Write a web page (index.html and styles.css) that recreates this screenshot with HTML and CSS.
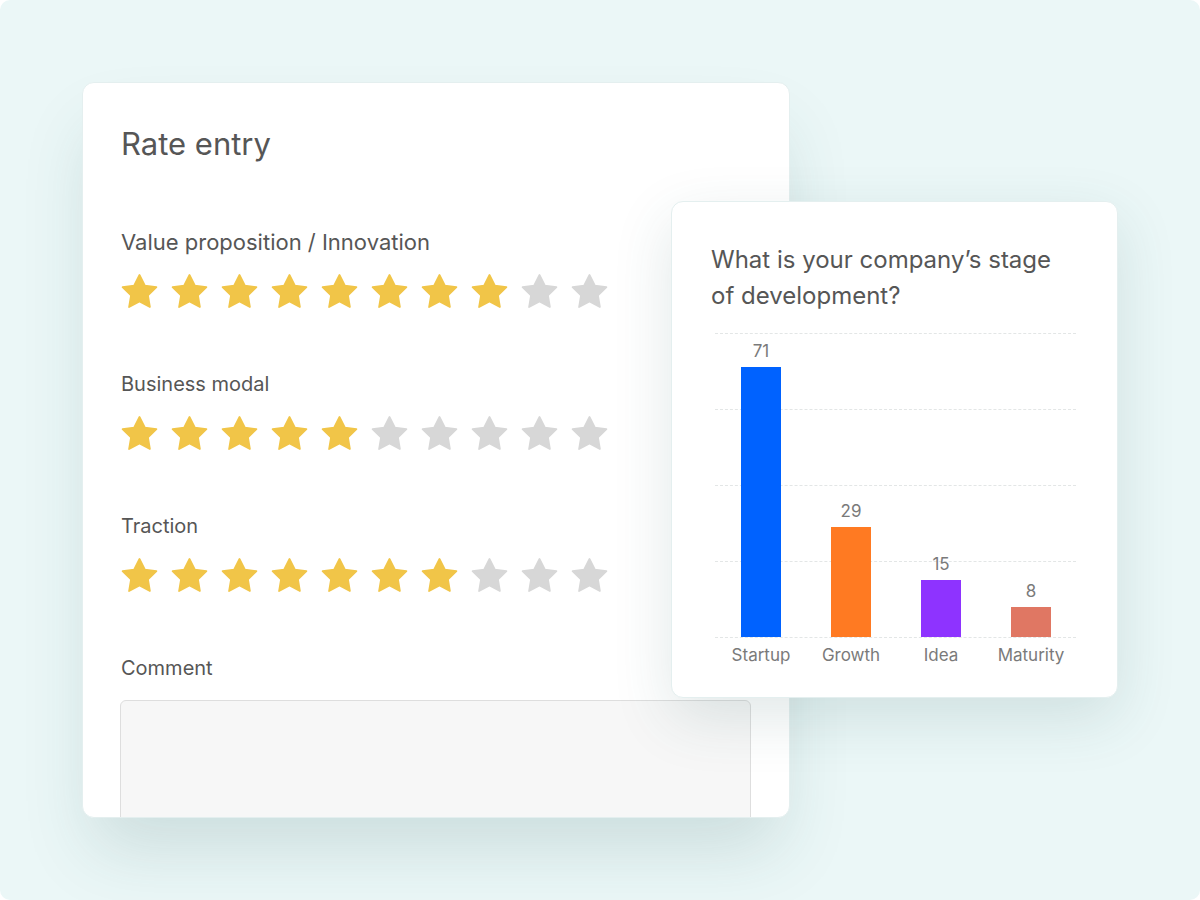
FILE: index.html
```html
<!DOCTYPE html>
<html lang="en">
<head>
  <meta charset="UTF-8" />
  <meta name="viewport" content="width=device-width, initial-scale=1.0"/>
  <title>Rate entry</title>
  <link rel="stylesheet" href="styles.css">
</head>
<body>
  <svg class="sprite" aria-hidden="true">
    <symbol id="star" viewBox="1.5 1.5 21 21">
      <path d="M12 2.6 15 8.6 21.6 9.5 16.8 14.2 17.9 20.8 12 17.7 6.1 20.8 7.2 14.2 2.4 9.5 9 8.6Z" stroke="currentColor" stroke-width="1" stroke-linejoin="round"/>
    </symbol>
  </svg>

  <div class="stage">
    <!-- Rating form -->
    <section class="card rate-card">
      <h1>Rate entry</h1>

      <div class="criterion">
        <h2 class="lead">Value proposition / Innovation</h2>
        <div class="stars" data-score="8"></div>
      </div>

      <div class="criterion">
        <h2>Business modal</h2>
        <div class="stars" data-score="5"></div>
      </div>

      <div class="criterion">
        <h2>Traction</h2>
        <div class="stars" data-score="7"></div>
      </div>

      <div class="comment">
        <h2>Comment</h2>
        <div class="textarea"></div>
      </div>
    </section>

    <!-- Poll results -->
    <section class="card poll-card">
      <h3>What is your company’s stage of development?</h3>

      <div class="chart">
        <div class="grid">
          <div class="grid-row"></div>
          <div class="grid-row"></div>
          <div class="grid-row"></div>
          <div class="grid-row"></div>
        </div>
        <div class="bars">
          <div class="bar-col">
            <span class="bar-value">71</span>
            <div class="bar startup" style="height: 88.75%"></div>
          </div>
          <div class="bar-col">
            <span class="bar-value">29</span>
            <div class="bar growth" style="height: 36.25%"></div>
          </div>
          <div class="bar-col">
            <span class="bar-value">15</span>
            <div class="bar idea" style="height: 18.75%"></div>
          </div>
          <div class="bar-col">
            <span class="bar-value">8</span>
            <div class="bar maturity" style="height: 10%"></div>
          </div>
        </div>
      </div>

      <div class="bar-labels">
        <span>Startup</span>
        <span>Growth</span>
        <span>Idea</span>
        <span>Maturity</span>
      </div>
    </section>
  </div>

  <script>
    // Fill each rating row with ten stars
    document.querySelectorAll('.stars').forEach(row => {
      const score = Number(row.dataset.score);
      for (let i = 0; i < 10; i++) {
        const cls = i < score ? 'star on' : 'star';
        row.insertAdjacentHTML('beforeend',
          '<svg class="' + cls + '"><use href="#star"/></svg>');
      }
    });
  </script>
</body>
</html>
```

FILE: styles.css
```css
:root {
  --bg: #ebf7f7;
  --text: #565656;
  --muted: #7a7a7a;
  --gold: #f1c548;
  --grey-star: #d7d7d7;
  --grid: #e3e6e6;
}

* {
  box-sizing: border-box;
}

body {
  margin: 0;
  background: #fff;
  font-family: Inter, "Noto Sans", sans-serif;
  color: var(--text);
}

.sprite {
  display: none;
}

.stage {
  position: relative;
  width: 1200px;
  height: 900px;
  background: var(--bg);
  border-radius: 10px;
  overflow: hidden;
  padding: 82px 0 0 82px;
}

.card {
  background: #fff;
  border-radius: 12px;
  border: 1px solid #e4efef;
}

/* Rating card */
.rate-card {
  width: 708px;
  height: 736px;
  padding: 43px 38px 0;
  overflow: hidden;
  box-shadow: 0 40px 70px -10px rgba(40, 90, 90, 0.16);
}

.rate-card h1 {
  margin: 0 0 66px;
  font-size: 31px;
  line-height: 36px;
  font-weight: 400;
}

.rate-card h2 {
  margin: 0 0 17px;
  font-size: 20px;
  line-height: 28px;
  font-weight: 400;
}

.rate-card h2.lead {
  font-size: 22px;
}

.criterion {
  margin-bottom: 60px;
}

.stars {
  display: flex;
  gap: 13px;
  height: 37px;
}

.star {
  width: 37px;
  height: 37px;
  color: var(--grey-star);
  fill: currentColor;
}

.star.on {
  color: var(--gold);
}

.comment h2 {
  margin-bottom: 18px;
}

.textarea {
  height: 200px;
  background: #f7f7f7;
  border: 1px solid #dedede;
  border-radius: 6px;
  margin-left: -1px;
}

/* Poll card */
.poll-card {
  position: absolute;
  left: 671px;
  top: 201px;
  width: 447px;
  height: 497px;
  padding: 40px 43px 0 39px;
  box-shadow: 0 20px 60px rgba(40, 90, 90, 0.14);
}

.poll-card h3 {
  margin: 0 0 19px;
  max-width: 350px;
  font-size: 24px;
  line-height: 36px;
  font-weight: 400;
}

.chart {
  position: relative;
  margin-left: 4px;
  width: 361px;
  height: 305px;
}

.grid {
  display: flex;
  flex-direction: column;
  height: 100%;
}

.grid-row {
  flex: 1;
  border-top: 1px dashed var(--grid);
}

.grid-row:last-child {
  border-bottom: 1px dashed var(--grid);
}

.bars {
  position: absolute;
  inset: 0 0 1px 0;
  display: grid;
  grid-template-columns: repeat(4, 90px);
}

.bar-col {
  display: flex;
  flex-direction: column;
  justify-content: flex-end;
  align-items: center;
  padding-left: 2px;
}

.bar-value {
  font-size: 17px;
  line-height: 20px;
  color: var(--muted);
  margin-bottom: 6px;
}

.bar {
  width: 40px;
}

.bar.startup { background: #0062ff; }
.bar.growth { background: #ff7a22; }
.bar.idea { background: #8e33ff; }
.bar.maturity { background: #e07763; }

.bar-labels {
  display: grid;
  grid-template-columns: repeat(4, 90px);
  margin: 5px 0 0 4px;
  width: 361px;
}

.bar-labels span {
  text-align: center;
  font-size: 17px;
  line-height: 24px;
  color: var(--muted);
  padding-left: 2px;
}
```
